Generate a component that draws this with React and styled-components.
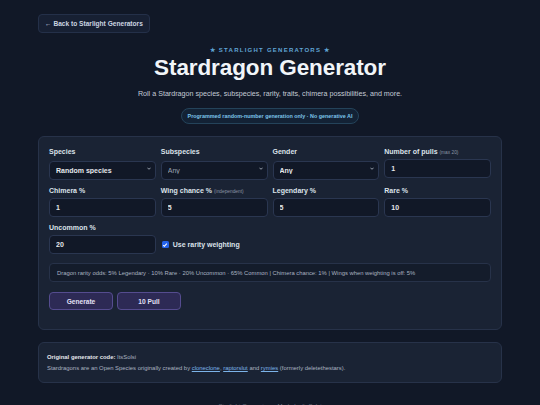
import React, { useState } from 'react';
import styled, { createGlobalStyle } from 'styled-components';

const GlobalStyle = createGlobalStyle`
  html, body {
    margin: 0;
    background: #111827;
    color: #e5e7eb;
    font-family: "Liberation Sans", Arial, sans-serif;
  }
`;

const Page = styled.div`
  width: 464px;
  margin: 0 auto;
  padding-top: 12px;
`;

const BackLink = styled.a`
  display: inline-flex;
  align-items: center;
  height: 19px;
  box-sizing: border-box;
  padding: 0 6px;
  font-size: 6.6px;
  font-weight: 700;
  color: #cbd5e1;
  background: #172033;
  border: 1px solid #243049;
  border-radius: 4px;
  text-decoration: none;
`;

const Header = styled.header`
  display: flex;
  flex-direction: column;
  align-items: center;
  margin-top: 13px;
`;

const Kicker = styled.div`
  font-size: 6px;
  font-weight: 700;
  letter-spacing: 1.25px;
  color: #60a5d6;
`;

const Title = styled.h1`
  margin: 2px 0 0;
  font-size: 22.5px;
  font-weight: 700;
  color: #f1f5f9;
  letter-spacing: -0.1px;
`;

const Subtitle = styled.p`
  margin: 9px 0 0;
  font-size: 7.15px;
  color: #c4cbd6;
`;

const Badge = styled.div`
  margin-top: 10px;
  padding: 4px 6px;
  font-size: 5.4px;
  font-weight: 700;
  color: #7cc4ea;
  background: #132235;
  border: 1px solid #24435a;
  border-radius: 999px;
`;

const Card = styled.section`
  margin-top: ${(p) => p.$top || 0}px;
  padding: ${(p) => p.$pad || '10px'};
  background: #1a2334;
  border: 1px solid #273249;
  border-radius: 6px;
`;

const Grid = styled.div`
  display: grid;
  grid-template-columns: repeat(4, 1fr);
  column-gap: 5px;
  row-gap: 6px;
`;

const Field = styled.label`
  display: flex;
  flex-direction: column;
  gap: 3px;
`;

const Label = styled.span`
  font-size: 7px;
  font-weight: 700;
  color: #dbe2ea;
  height: 9px;
  line-height: 9px;
`;

const Hint = styled.small`
  font-size: 4.8px;
  font-weight: 400;
  color: #8b95a6;
`;

const Input = styled.input`
  box-sizing: border-box;
  width: 100%;
  height: 19px;
  padding: 0 6px;
  font-family: inherit;
  font-size: 7px;
  font-weight: 700;
  color: #e5e7eb;
  -webkit-text-fill-color: #e5e7eb;
  background: #111827;
  border: 1px solid #2a3650;
  border-radius: 4px;
  outline: none;
`;

const SelectWrap = styled.div`
  position: relative;
`;

const Select = styled.select`
  box-sizing: border-box;
  width: 100%;
  height: 19px;
  padding: 0 6px;
  appearance: none;
  font-family: inherit;
  font-size: 7px;
  font-weight: ${(p) => (p.$muted ? 400 : 700)};
  color: ${(p) => (p.$muted ? '#9aa3b2' : '#e5e7eb')};
  background: #111827;
  border: 1px solid #2a3650;
  border-radius: 4px;
  outline: none;
`;

const Chevron = styled.svg`
  position: absolute;
  right: 5px;
  top: 8px;
  width: 4px;
  height: 3px;
  pointer-events: none;
`;

const CheckRow = styled.label`
  display: flex;
  align-items: center;
  gap: 4px;
  align-self: end;
  height: 19px;
  padding-left: 1px;
  font-size: 7px;
  font-weight: 700;
  color: #dbe2ea;
`;

const Box = styled.span`
  width: 7px;
  height: 7px;
  border-radius: 1.5px;
  background: #2563eb;
  display: flex;
  align-items: center;
  justify-content: center;
`;

const Odds = styled.div`
  margin-top: 9px;
  height: 19px;
  box-sizing: border-box;
  display: flex;
  align-items: center;
  padding: 0 7px;
  font-size: 5.85px;
  color: #a9b2c0;
  background: #141c2b;
  border: 1px solid #273249;
  border-radius: 4px;
`;

const Actions = styled.div`
  display: flex;
  gap: 4px;
  margin-top: 10px;
`;

const Button = styled.button`
  width: 64px;
  height: 18px;
  font-family: inherit;
  font-size: 6.6px;
  font-weight: 700;
  color: #e2e0f5;
  background: #2d2a55;
  border: 1px solid #554c8f;
  border-radius: 4px;
`;

const Credit = styled.p`
  margin: 0;
  font-size: 5.9px;
  line-height: 11px;
  color: #aab3c1;
  b {
    color: #e5e7eb;
  }
  a {
    color: #7cb3e8;
  }
`;

const Footer = styled.footer`
  margin-top: 20px;
  text-align: center;
  font-size: 6px;
  color: #6b7586;
`;

const selectFields = [
  { label: 'Species', value: 'Random species' },
  { label: 'Subspecies', value: 'Any', muted: true },
  { label: 'Gender', value: 'Any' },
];

const ChevronIcon = () => (
  <Chevron viewBox="0 0 10 6">
    <path d="M1 1l4 4 4-4" fill="none" stroke="#cbd5e1" strokeWidth="1.8" />
  </Chevron>
);

const SelectField = ({ label, value, muted }) => (
  <Field>
    <Label>{label}</Label>
    <SelectWrap>
      <Select $muted={muted} defaultValue={value}>
        <option>{value}</option>
      </Select>
      <ChevronIcon />
    </SelectWrap>
  </Field>
);

const NumberField = ({ label, hint, value }) => {
  const [v, setV] = useState(value);
  return (
    <Field>
      <Label>
        {label} {hint && <Hint>{hint}</Hint>}
      </Label>
      <Input value={v} onChange={(e) => setV(e.target.value)} />
    </Field>
  );
};

const App = () => (
  <>
    <GlobalStyle />
    <Page>
      <BackLink href="#">← Back to Starlight Generators</BackLink>
      <Header>
        <Kicker>★ STARLIGHT GENERATORS ★</Kicker>
        <Title>Stardragon Generator</Title>
        <Subtitle>
          Roll a Stardragon species, subspecies, rarity, traits, chimera possibilities, and more.
        </Subtitle>
        <Badge>Programmed random-number generation only · No generative AI</Badge>
      </Header>

      <Card $top={12} $pad="10px 10px 19px">
        <Grid>
          {selectFields.map((f) => (
            <SelectField key={f.label} {...f} />
          ))}
          <NumberField label="Number of pulls" hint="(max 20)" value="1" />
          <NumberField label="Chimera %" value="1" />
          <NumberField label="Wing chance %" hint="(independent)" value="5" />
          <NumberField label="Legendary %" value="5" />
          <NumberField label="Rare %" value="10" />
          <NumberField label="Uncommon %" value="20" />
          <CheckRow>
            <Box>
              <svg width="6" height="6" viewBox="0 0 10 10">
                <path d="M2 5.2l2 2 4-4.4" fill="none" stroke="#fff" strokeWidth="1.8" />
              </svg>
            </Box>
            Use rarity weighting
          </CheckRow>
        </Grid>
        <Odds>
          Dragon rarity odds: 5% Legendary · 10% Rare · 20% Uncommon · 65% Common | Chimera chance: 1% | Wings when weighting is off: 5%
        </Odds>
        <Actions>
          <Button>Generate</Button>
          <Button>10 Pull</Button>
        </Actions>
      </Card>

      <Card $top={12} $pad="9px 8px 8px">
        <Credit>
          <b>Original generator code:</b> ItsSolsi
        </Credit>
        <Credit>
          Stardragons are an Open Species originally created by <a href="#">cloneclone</a>,{' '}
          <a href="#">raptorslut</a> and <a href="#">rymies</a> (formerly deletethestars).
        </Credit>
      </Card>

      <Footer>Starlight Generators · Made by ItsSolsi</Footer>
    </Page>
  </>
);

export default App;
